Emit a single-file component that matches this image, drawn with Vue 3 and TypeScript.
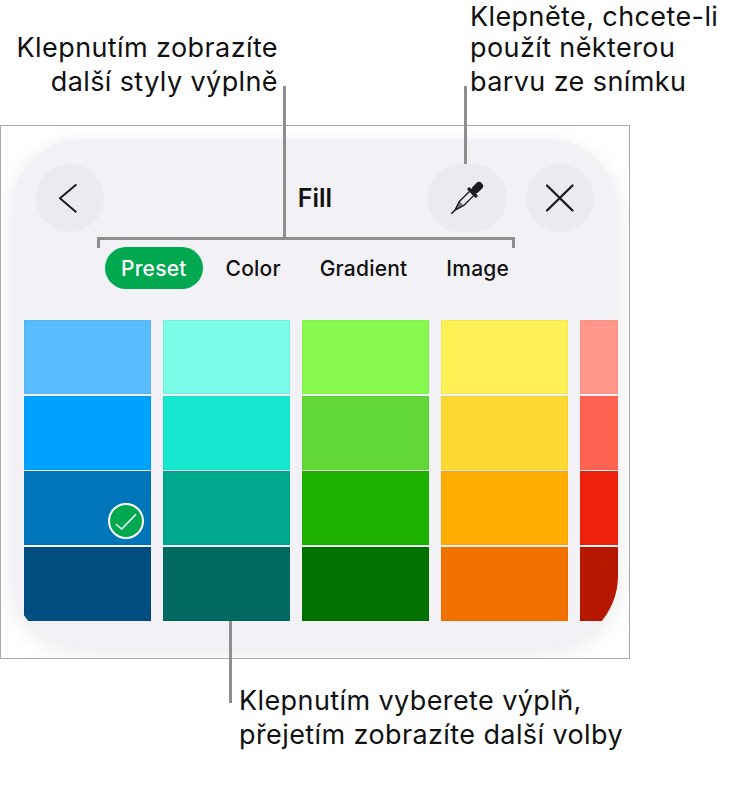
<script setup lang="ts">
const tabs = ['Preset', 'Color', 'Gradient', 'Image']

const columns = [
  ['#58bcff', '#00a2ff', '#0076ba', '#004d80'],
  ['#7afce9', '#16e7cf', '#00a88d', '#006a61'],
  ['#88fa4f', '#61d836', '#1db100', '#017100'],
  ['#fff056', '#fed931', '#ffad00', '#f27200'],
  ['#ff968c', '#ff6251', '#ee220c', '#b51700']
]
</script>

<template>
  <div class="page">
    <div class="top-notes">
      <p class="note note-left">Klepnutím zobrazíte<br />další styly výplně</p>
      <p class="note note-right"><span class="first-line">Klepněte, chcete-li</span>použít některou<br />barvu ze snímku</p>
    </div>

    <div class="frame">
      <div class="panel">
        <div class="header">
          <button class="round">
            <svg width="24" height="30" viewBox="0 0 24 30">
              <path d="M17.700 2 2 15.300 17.700 28.700" fill="none" stroke="#1c1c1e" stroke-width="2" stroke-linecap="round" stroke-linejoin="round" />
            </svg>
          </button>
          <h1 class="title">Fill</h1>
          <button class="round wide">
            <svg width="44" height="44" viewBox="0 0 44 44">
              <g transform="rotate(45 22 22)">
                <rect x="18" y="1" width="8" height="13" rx="4" fill="#1c1c1e" />
                <rect x="15.500" y="12.500" width="13" height="3.500" rx="1.700" fill="#1c1c1e" />
                <path d="M19 16v13.500l3 9.500 3-9.500V16" fill="none" stroke="#1c1c1e" stroke-width="1.400" stroke-linejoin="round" />
                <path d="M19 29.500h6l-3 9.500z" fill="#1c1c1e" opacity="0.55" />
                <path d="M22 39v4.500" fill="none" stroke="#1c1c1e" stroke-width="1.600" stroke-linecap="round" />
              </g>
            </svg>
          </button>
          <button class="round close">
            <svg width="28" height="28" viewBox="0 0 28 28">
              <path d="M1 1.500 26.500 26.500M26.500 1.500 1 26.500" fill="none" stroke="#1c1c1e" stroke-width="2.400" stroke-linecap="round" />
            </svg>
          </button>
        </div>

        <div class="tabs">
          <span v-for="(tab, i) in tabs" :key="tab" class="tab" :class="{ active: i === 0 }">{{ tab }}</span>
        </div>

        <div class="swatches">
          <div v-for="(col, c) in columns" :key="c" class="column">
            <div v-for="(color, r) in col" :key="color" class="cell" :style="{ background: color }">
              <span v-if="c === 0 && r === 2" class="check">
                <svg width="22" height="18" viewBox="0 0 22 18">
                  <path d="M1.300 12.500 6.700 17 20.700 2.500" fill="none" stroke="#fff" stroke-width="1.500" stroke-linecap="round" stroke-linejoin="round" />
                </svg>
              </span>
            </div>
          </div>
        </div>
      </div>
    </div>

    <p class="note note-bottom">Klepnutím vyberete výplň,<br />přejetím zobrazíte další volby</p>

    <!-- callout lines -->
    <i class="line styles-line"></i>
    <i class="bracket"></i>
    <i class="line dropper-line"></i>
    <i class="line swatch-line"></i>
  </div>
</template>

<style scoped>
.page {
  position: relative;
  width: 732px;
  height: 790px;
  overflow: hidden;
  background: #fff;
  font-family: Inter, 'Liberation Sans', sans-serif;
  color: #111;
}

.top-notes {
  display: flex;
  height: 125px;
}

.note {
  margin: 0;
  font-size: 27px;
  line-height: 34px;
  letter-spacing: 0.4px;
  white-space: nowrap;
}

.note-left {
  flex: none;
  width: 278px;
  margin-top: 31px;
  text-align: right;
}

.note-right {
  margin-left: 192px;
}

.first-line {
  display: block;
  margin-bottom: -2px;
  line-height: 33px;
}

.note-bottom {
  margin: 25px 0 0 239px;
  line-height: 33.5px;
}

.frame {
  box-sizing: border-box;
  width: 630px;
  height: 534px;
  padding: 13px 11px 12px;
  border: 1px solid #aaa;
  background: #fff;
  overflow: hidden;
}

.panel {
  box-sizing: border-box;
  height: 100%;
  padding: 25px 0 0 12px;
  border-radius: 70px;
  background: #f1f1f6;
  box-shadow: 0 6px 26px rgba(0, 0, 0, 0.09);
  overflow: hidden;
}

.header {
  display: flex;
  align-items: center;
  height: 68px;
  padding-left: 12px;
}

.round {
  flex: none;
  display: flex;
  align-items: center;
  justify-content: center;
  width: 68px;
  height: 68px;
  padding: 0;
  border: 0;
  border-radius: 34px;
  background: #ebebef;
}

.round.wide {
  width: 80px;
}

.round.close {
  margin-left: 19px;
}

.title {
  flex: none;
  box-sizing: border-box;
  width: 323px;
  margin: 0;
  padding-left: 99px;
  font-size: 25px;
  font-weight: 600;
  text-align: center;
}

.tabs {
  display: flex;
  align-items: center;
  gap: 7px;
  height: 42px;
  margin: 15px 0 0 81px;
}

.tab {
  display: flex;
  align-items: center;
  height: 42px;
  padding: 0 16px;
  font-size: 21px;
  font-weight: 500;
  letter-spacing: 0.2px;
  border-radius: 21px;
}

.tab.active {
  background: #00a84f;
  color: #fff;
}

.swatches {
  display: flex;
  gap: 12px;
  margin-top: 31px;
}

.column {
  flex: none;
  display: flex;
  flex-direction: column;
  gap: 1.5px;
  width: 127px;
  height: 301px;
}

.cell {
  position: relative;
  flex: 1;
  box-shadow: inset 0 0 0 1px rgba(0, 0, 0, 0.04);
}

.check {
  position: absolute;
  right: 7px;
  bottom: 6px;
  display: flex;
  align-items: center;
  justify-content: center;
  box-sizing: border-box;
  width: 36px;
  height: 36px;
  border: 2px solid #fff;
  border-radius: 50%;
  background: #00a84f;
}

.line,
.bracket {
  position: absolute;
  display: block;
  box-sizing: border-box;
}

.line {
  width: 3px;
  background: #8e8e8e;
}

.styles-line {
  left: 283px;
  top: 86px;
  height: 152px;
}

.dropper-line {
  left: 464px;
  top: 86px;
  height: 78px;
}

.swatch-line {
  left: 229px;
  top: 621px;
  height: 82px;
}

.bracket {
  left: 97px;
  top: 237px;
  width: 418px;
  height: 11px;
  border: 3px solid #8e8e8e;
  border-bottom: 0;
}
</style>

<style>
html,
body {
  margin: 0;
  background: #fff;
}
</style>
